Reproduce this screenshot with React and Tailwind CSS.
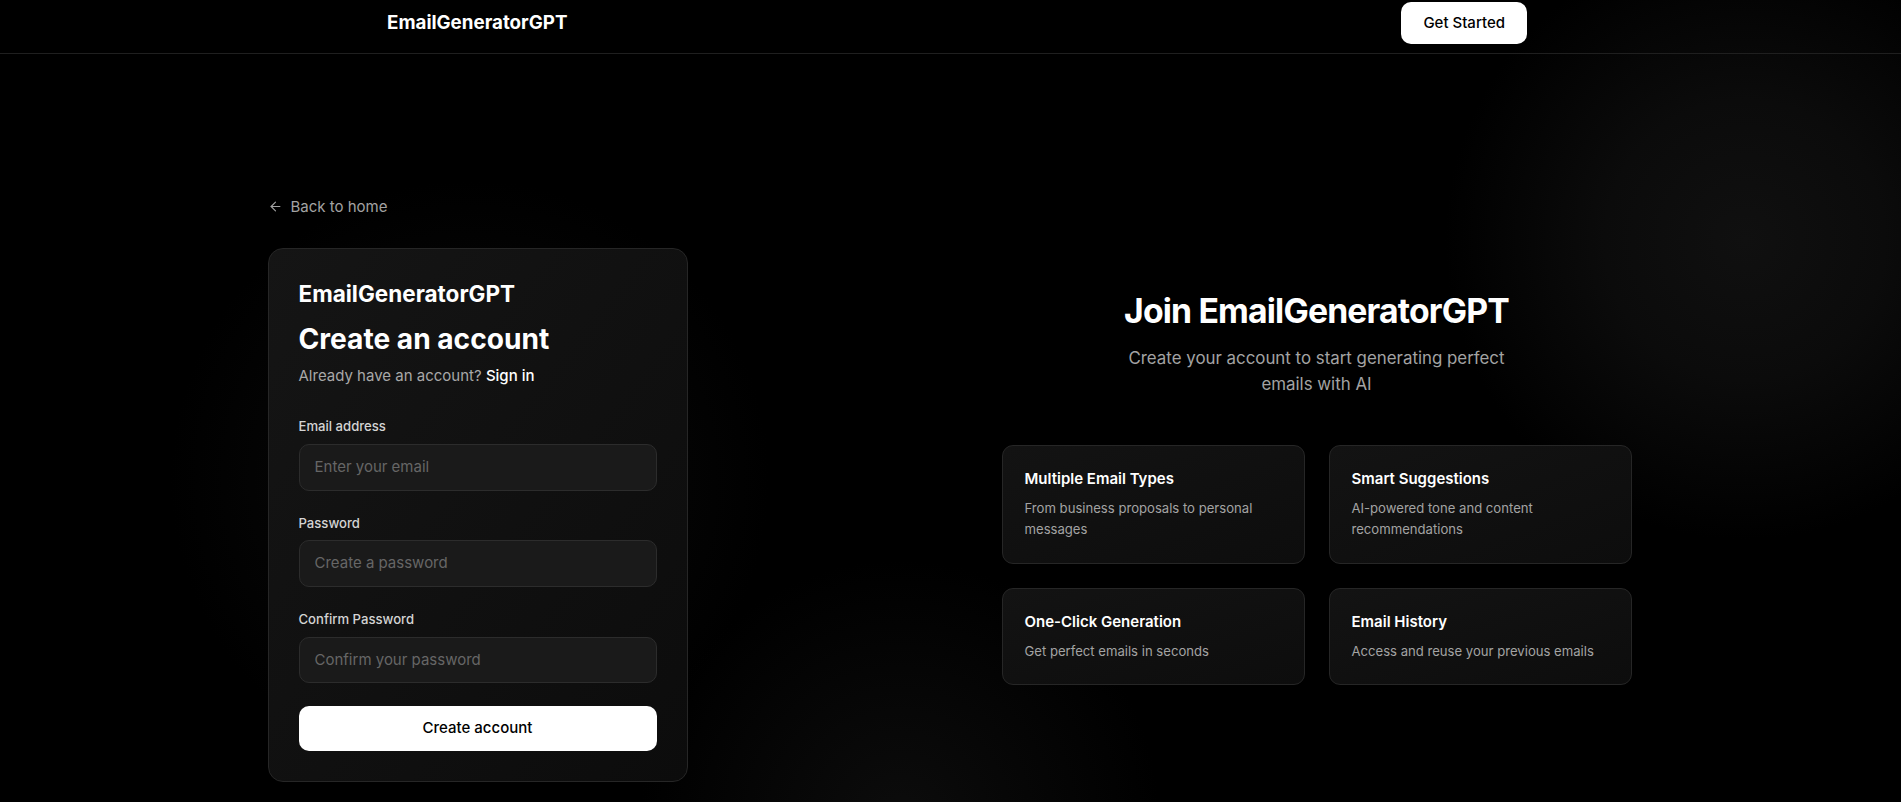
import React from 'react';
import { ArrowLeft } from 'lucide-react';

const features = [
  { title: 'Multiple Email Types', text: 'From business proposals to personal messages' },
  { title: 'Smart Suggestions', text: 'AI-powered tone and content recommendations' },
  { title: 'One-Click Generation', text: 'Get perfect emails in seconds' },
  { title: 'Email History', text: 'Access and reuse your previous emails' },
];

const Field = ({ label, type, placeholder }) => (
  <div>
    <label className="block text-[13.125px] leading-[18.75px] font-medium text-[#d4d4d4]">{label}</label>
    <input
      type={type}
      placeholder={placeholder}
      className="mt-2 block w-full rounded-[10px] border border-[#2c2c2c] bg-[#1a1a1a] px-[15px] py-[11px] text-[15px] leading-[22.5px] text-white placeholder-[#666] focus:outline-none"
    />
  </div>
);

const App = () => {
  return (
    <div className="min-h-screen bg-black font-['Inter','Liberation_Sans',sans-serif] text-white bg-[radial-gradient(circle_at_1745px_240px,#101010_0px,#0b0b0b_140px,transparent_300px),radial-gradient(circle_at_470px_480px,#0b0b0b_0px,transparent_300px),radial-gradient(circle_at_900px_820px,#0c0c0c_0px,transparent_260px)]">
      {/* Header */}
      <header className="border-b border-[#1f1f1f]">
        <div className="mx-auto flex w-[1153px] items-center justify-between pt-[2px] pb-[9px]">
          <span className="pl-[13px] text-[18.75px] leading-[26px] font-bold">EmailGeneratorGPT</span>
          <button className="rounded-[10px] bg-white px-[22px] py-[9.5px] text-[15px] leading-[22.5px] font-medium text-black">
            Get Started
          </button>
        </div>
      </header>

      <main className="mx-auto flex max-w-[1366px] items-center justify-between pt-[142px] pb-[40px]">
        {/* Left: form */}
        <div className="w-[420px]">
          <a href="#" className="flex items-center gap-2 text-[15px] leading-[22.5px] text-[#a3a3a3]">
            <ArrowLeft className="h-[15px] w-[15px]" strokeWidth={1.75} />
            Back to home
          </a>

          <div className="mt-[30px] rounded-[15px] border border-[#262626] bg-gradient-to-br from-[#151515] to-[#0c0c0c] p-[30px]">
            <div className="text-[22.5px] leading-[30px] font-bold">EmailGeneratorGPT</div>
            <h1 className="mt-[14px] text-[28.125px] leading-[33.75px] font-bold">Create an account</h1>
            <p className="mt-2 text-[15px] leading-[22.5px] text-[#a8a8a8]">
              Already have an account? <a href="#" className="font-medium text-white">Sign in</a>
            </p>

            <form className="mt-[30px] flex flex-col gap-[23px]">
              <Field label="Email address" type="email" placeholder="Enter your email" />
              <Field label="Password" type="password" placeholder="Create a password" />
              <Field label="Confirm Password" type="password" placeholder="Confirm your password" />
              <button
                type="button"
                className="w-full rounded-[10px] bg-white py-[11.25px] text-[15px] leading-[22.5px] font-medium text-black"
              >
                Create account
              </button>
            </form>
          </div>
        </div>

        {/* Right: intro */}
        <div className="mr-[2px] w-[630px] text-center">
          <h2 className="text-[33.75px] leading-[37.5px] font-bold tracking-tight">Join EmailGeneratorGPT</h2>
          <p className="mx-auto mt-[15px] max-w-[384px] text-[16.875px] leading-[26.5px] text-[#a3a3a3]">
            Create your account to start generating perfect emails with AI
          </p>

          <div className="mt-[47px] grid grid-cols-2 gap-6 text-left">
            {features.map((f) => (
              <div
                key={f.title}
                className="rounded-[11px] border border-[#262626] bg-gradient-to-br from-[#131313] to-[#0d0d0d] p-[22px]"
              >
                <h3 className="text-[15px] leading-[22.5px] font-semibold">{f.title}</h3>
                <p className="mt-2 text-[13.125px] leading-[21.3px] text-[#a3a3a3]">{f.text}</p>
              </div>
            ))}
          </div>
        </div>
      </main>
    </div>
  );
};

export default App;
